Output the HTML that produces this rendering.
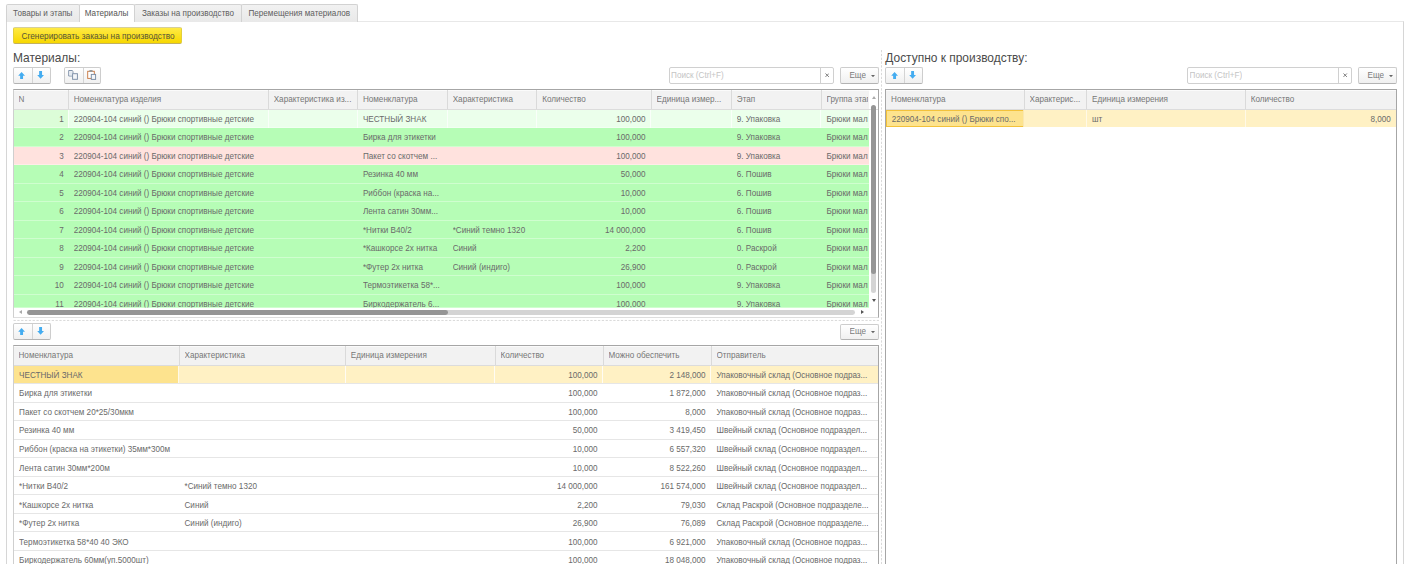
<!DOCTYPE html><html><head><meta charset='utf-8'><style>
*{box-sizing:border-box;margin:0;padding:0}
html,body{width:1406px;height:564px;overflow:hidden;background:#fff}
body{position:relative;font-family:"Liberation Sans",sans-serif;font-size:8.15px;color:#6a6a6a}
.a{position:absolute}
.t{position:absolute;white-space:nowrap;overflow:hidden;line-height:1;padding:2px 0;margin-top:-2px}
.tab{position:absolute;top:4px;height:17.5px;background:linear-gradient(#f1f1f1,#e9e9e9);border:1px solid #d2d2d2;border-bottom:none;border-radius:2px 2px 0 0;color:#5e5e5e}
.tab.act{background:#fff;height:18px;z-index:2;color:#555}
.frame{position:absolute;left:6px;top:21px;width:1397.5px;height:600px;border:1px solid #d6d6d6;border-top-color:#e8e8e8}
.ybtn{position:absolute;left:13px;top:27.3px;width:168.5px;height:16.9px;border-radius:2px;background:linear-gradient(#ffea45,#f7d700);border:1px solid #e3cf3c;border-top-color:#d6cf9a;border-bottom-color:#c2b160;color:#55553a;font-size:8.3px}
.title{position:absolute;font-size:11.95px;color:#4a4a4a;white-space:nowrap;line-height:1}
.btn{position:absolute;background:linear-gradient(#fff,#f0f0f0);border:1px solid #cdcdcd;border-bottom-color:#b3b3b3;border-radius:2px}
.search{position:absolute;background:#fff;border:1px solid #d0d0d0;border-radius:2px;color:#c4c4c4}
.cell{position:absolute;white-space:nowrap;overflow:hidden;line-height:1;padding:2px 0;margin-top:-2px}
.r{text-align:right}
</style></head><body>
<div class='frame'></div>
<div class='tab' style='left:6px;width:73.5px'><span class='t' style='left:0;right:0;text-align:center;top:4.6px'>Товары и этапы</span></div>
<div class='tab act' style='left:78.5px;width:56px'><span class='t' style='left:0;right:0;text-align:center;top:4.6px'>Материалы</span></div>
<div class='tab' style='left:134px;width:108px'><span class='t' style='left:0;right:0;text-align:center;top:4.6px'>Заказы на производство</span></div>
<div class='tab' style='left:241px;width:116.5px'><span class='t' style='left:0;right:0;text-align:center;top:4.6px'>Перемещения материалов</span></div>
<div class='ybtn'><span class='t' style='left:1.6px;right:0;text-align:center;top:3.3px'>Сгенерировать заказы на производство</span></div>
<div class='title' style='left:13px;top:52.6px'>Материалы:</div>
<div class='title' style='left:885.3px;top:52.6px'>Доступно к производству:</div>
<div class='btn' style='left:13px;top:67.3px;width:37.7px;height:16.3px'></div>
<div class='a' style='left:32px;top:67.8px;width:1px;height:15.3px;background:#d4d4d4'></div>
<svg class='a' style='left:18.3px;top:71.85px' width='7.2' height='7.2' viewBox='0 0 7.2 7.2'><path d='M3.6 0.1 L7.0 3.8 L5.05 3.8 L5.05 7.0 L2.15 7.0 L2.15 3.8 L0.2 3.8 Z' fill='#44acf0'/></svg>
<svg class='a' style='left:36.9px;top:71.15px' width='7.2' height='7.8' viewBox='0 0 7.2 7.8'><path d='M3.6 7.7 L7.0 3.95 L5.05 3.95 L5.05 0.1 L2.15 0.1 L2.15 3.95 L0.2 3.95 Z' fill='#44acf0'/></svg>
<div class='btn' style='left:64.3px;top:67.3px;width:37px;height:16.3px'></div>
<div class='a' style='left:83px;top:67.8px;width:1px;height:15.3px;background:#d4d4d4'></div>
<svg class='a' style='left:64px;top:67px' width='38' height='17' viewBox='0 0 38 17'>
<path d='M4.7 3.5 H8.2 L9.0 4.3 V6.5' fill='none' stroke='#7b8ea6' stroke-width='0.95'/>
<path d='M4.7 3.5 V9.0 H8.3' fill='none' stroke='#7b8ea6' stroke-width='0.95'/>
<rect x='5.4' y='4.3' width='2.6' height='4.1' fill='#e4eaf1'/>
<rect x='8.6' y='6.7' width='4.8' height='5.6' fill='#f4f6f9' stroke='#7b8ea6' stroke-width='0.95'/>
<rect x='23.7' y='4.3' width='6.6' height='7.1' fill='#fff' stroke='#c97a45' stroke-width='0.95'/>
<rect x='25.3' y='3.0' width='3.4' height='1.9' rx='0.6' fill='#9a9a9a'/>
<rect x='27.3' y='7.4' width='4.3' height='5.0' fill='#f4f6f9' stroke='#7b8ea6' stroke-width='0.95'/>
</svg>
<div class='search' style='left:668.5px;top:67.3px;width:165.3px;height:16.3px'><span class='t' style='left:1.6px;top:3.75px'>Поиск (Ctrl+F)</span></div>
<div class='a' style='left:819.9px;top:67.3px;width:1px;height:16.3px;background:#d0d0d0'></div>
<svg class='a' style='left:824.9px;top:72.85px' width='4.4' height='4.4' viewBox='0 0 4.4 4.4'><path d='M0.5 0.5 L3.9 3.9 M3.9 0.5 L0.5 3.9' stroke='#707070' stroke-width='0.9'/></svg>
<div class='btn' style='left:840.2px;top:67.3px;width:38.5px;height:16.3px;color:#7a7a7a'><span class='t' style='left:8.2px;top:3.85px'>Еще</span><svg class='a' style='left:30.2px;top:6.85px' width='4' height='2.2' viewBox='0 0 4 2.2'><path d='M0 0 L4 0 L2 2.2 Z' fill='#666'/></svg></div>
<div class='btn' style='left:885.2px;top:67.3px;width:38.2px;height:16.3px'></div>
<div class='a' style='left:904.1px;top:67.8px;width:1px;height:15.3px;background:#d4d4d4'></div>
<svg class='a' style='left:890.5px;top:71.85px' width='7.2' height='7.2' viewBox='0 0 7.2 7.2'><path d='M3.6 0.1 L7.0 3.8 L5.05 3.8 L5.05 7.0 L2.15 7.0 L2.15 3.8 L0.2 3.8 Z' fill='#44acf0'/></svg>
<svg class='a' style='left:909px;top:71.15px' width='7.2' height='7.8' viewBox='0 0 7.2 7.8'><path d='M3.6 7.7 L7.0 3.95 L5.05 3.95 L5.05 0.1 L2.15 0.1 L2.15 3.95 L0.2 3.95 Z' fill='#44acf0'/></svg>
<div class='search' style='left:1187px;top:67.3px;width:165.4px;height:16.3px'><span class='t' style='left:1.6px;top:3.75px'>Поиск (Ctrl+F)</span></div>
<div class='a' style='left:1337.8px;top:67.3px;width:1px;height:16.3px;background:#d0d0d0'></div>
<svg class='a' style='left:1343.15px;top:72.85px' width='4.4' height='4.4' viewBox='0 0 4.4 4.4'><path d='M0.5 0.5 L3.9 3.9 M3.9 0.5 L0.5 3.9' stroke='#707070' stroke-width='0.9'/></svg>
<div class='btn' style='left:1358.3px;top:67.3px;width:38.5px;height:16.3px;color:#7a7a7a'><span class='t' style='left:8.2px;top:3.85px'>Еще</span><svg class='a' style='left:30.2px;top:6.85px' width='4' height='2.2' viewBox='0 0 4 2.2'><path d='M0 0 L4 0 L2 2.2 Z' fill='#666'/></svg></div>
<div class='btn' style='left:13px;top:323.4px;width:37.6px;height:16.2px'></div>
<div class='a' style='left:32px;top:323.9px;width:1px;height:15.2px;background:#d4d4d4'></div>
<svg class='a' style='left:18.3px;top:327.9px' width='7.2' height='7.2' viewBox='0 0 7.2 7.2'><path d='M3.6 0.1 L7.0 3.8 L5.05 3.8 L5.05 7.0 L2.15 7.0 L2.15 3.8 L0.2 3.8 Z' fill='#44acf0'/></svg>
<svg class='a' style='left:36.9px;top:327.2px' width='7.2' height='7.8' viewBox='0 0 7.2 7.8'><path d='M3.6 7.7 L7.0 3.95 L5.05 3.95 L5.05 0.1 L2.15 0.1 L2.15 3.95 L0.2 3.95 Z' fill='#44acf0'/></svg>
<div class='btn' style='left:840.4px;top:323.6px;width:38.3px;height:16.1px;color:#7a7a7a'><span class='t' style='left:8.2px;top:3.75px'>Еще</span><svg class='a' style='left:30px;top:6.75px' width='4' height='2.2' viewBox='0 0 4 2.2'><path d='M0 0 L4 0 L2 2.2 Z' fill='#666'/></svg></div>
<svg class='a' style='left:13px;top:319px' width='866' height='3'><line x1='0.5' y1='1.45' x2='866' y2='1.45' stroke='#d9d9d9' stroke-width='1' stroke-dasharray='2.3 1.52'/></svg>
<svg class='a' style='left:880px;top:50px' width='3' height='520'><line x1='1.5' y1='0' x2='1.5' y2='520' stroke='#d9d9d9' stroke-width='1' stroke-dasharray='2.3 1.52'/></svg>
<div class='a' style='left:12.6px;top:88.7px;width:866.4px;height:229.1px;border:1px solid #a6a6a6;border-left-color:#cfcfcf;border-bottom-color:#dedede;background:#fff'></div>
<div class='a' style='left:13.6px;top:89.7px;width:855.7px;height:18.9px;background:#f2f2f2;border-top:1px solid #fbfbfb'></div>
<div class='a' style='left:13.6px;top:108.6px;width:864.4px;height:1px;background:#dcdcdc'></div>
<div class='a' style='left:67.7px;top:89.7px;width:1px;height:18.9px;background:#dadada'></div>
<div class='a' style='left:267.7px;top:89.7px;width:1px;height:18.9px;background:#dadada'></div>
<div class='a' style='left:356.9px;top:89.7px;width:1px;height:18.9px;background:#dadada'></div>
<div class='a' style='left:446.7px;top:89.7px;width:1px;height:18.9px;background:#dadada'></div>
<div class='a' style='left:536.2px;top:89.7px;width:1px;height:18.9px;background:#dadada'></div>
<div class='a' style='left:650.5px;top:89.7px;width:1px;height:18.9px;background:#dadada'></div>
<div class='a' style='left:730.8px;top:89.7px;width:1px;height:18.9px;background:#dadada'></div>
<div class='a' style='left:820.5px;top:89.7px;width:1px;height:18.9px;background:#dadada'></div>
<div class='cell' style='left:18.5px;width:48.2px;top:95.95px;color:#777'>N</div>
<div class='cell' style='left:73.7px;width:193px;top:95.95px;color:#777'>Номенклатура изделия</div>
<div class='cell' style='left:273.7px;width:82.2px;top:95.95px;color:#777'>Характеристика из...</div>
<div class='cell' style='left:362.9px;width:82.8px;top:95.95px;color:#777'>Номенклатура</div>
<div class='cell' style='left:452.7px;width:82.5px;top:95.95px;color:#777'>Характеристика</div>
<div class='cell' style='left:542.2px;width:107.3px;top:95.95px;color:#777'>Количество</div>
<div class='cell' style='left:656.5px;width:73.3px;top:95.95px;color:#777'>Единица измер...</div>
<div class='cell' style='left:736.8px;width:82.7px;top:95.95px;color:#777'>Этап</div>
<div class='cell' style='left:826.5px;width:41.3px;top:95.95px;color:#777'>Группа этапа</div>
<div class='a' style='left:13.6px;top:109.5px;width:855.7px;height:18.53px;overflow:hidden;background:#ebffeb'>
<div class='a' style='left:0px;top:0;width:54.6px;height:18.53px;background:#dcfdd8'></div>
<div class='cell r' style='left:2px;width:48.2px;top:6.2px'>1</div>
<div class='a' style='left:54.1px;top:0;width:1px;height:18.53px;background:rgba(255,255,255,0.7)'></div>
<div class='cell' style='left:60.1px;width:193px;top:6.2px'>220904-104 синий () Брюки спортивные детские</div>
<div class='a' style='left:254.1px;top:0;width:1px;height:18.53px;background:rgba(255,255,255,0.7)'></div>
<div class='a' style='left:343.3px;top:0;width:1px;height:18.53px;background:rgba(255,255,255,0.7)'></div>
<div class='cell' style='left:349.3px;width:82.8px;top:6.2px'>ЧЕСТНЫЙ ЗНАК</div>
<div class='a' style='left:433.1px;top:0;width:1px;height:18.53px;background:rgba(255,255,255,0.7)'></div>
<div class='a' style='left:522.6px;top:0;width:1px;height:18.53px;background:rgba(255,255,255,0.7)'></div>
<div class='cell r' style='left:525.1px;width:106.9px;top:6.2px'>100,000</div>
<div class='a' style='left:636.9px;top:0;width:1px;height:18.53px;background:rgba(255,255,255,0.7)'></div>
<div class='a' style='left:717.2px;top:0;width:1px;height:18.53px;background:rgba(255,255,255,0.7)'></div>
<div class='cell' style='left:723.2px;width:82.7px;top:6.2px'>9. Упаковка</div>
<div class='a' style='left:806.9px;top:0;width:1px;height:18.53px;background:rgba(255,255,255,0.7)'></div>
<div class='cell' style='left:812.9px;width:41.3px;top:6.2px'>Брюки мал</div>
<div class='a' style='left:0;right:0;bottom:0;height:1px;background:rgba(255,255,255,0.35)'></div>
</div>
<div class='a' style='left:13.6px;top:128.03px;width:855.7px;height:18.53px;overflow:hidden;background:#b6fdb6'>
<div class='cell r' style='left:2px;width:48.2px;top:6.2px'>2</div>
<div class='cell' style='left:60.1px;width:193px;top:6.2px'>220904-104 синий () Брюки спортивные детские</div>
<div class='cell' style='left:349.3px;width:82.8px;top:6.2px'>Бирка для этикетки</div>
<div class='cell r' style='left:525.1px;width:106.9px;top:6.2px'>100,000</div>
<div class='cell' style='left:723.2px;width:82.7px;top:6.2px'>9. Упаковка</div>
<div class='cell' style='left:812.9px;width:41.3px;top:6.2px'>Брюки мал</div>
<div class='a' style='left:0;right:0;bottom:0;height:1px;background:rgba(255,255,255,0.35)'></div>
</div>
<div class='a' style='left:13.6px;top:146.56px;width:855.7px;height:18.53px;overflow:hidden;background:#ffe2de'>
<div class='cell r' style='left:2px;width:48.2px;top:6.2px'>3</div>
<div class='cell' style='left:60.1px;width:193px;top:6.2px'>220904-104 синий () Брюки спортивные детские</div>
<div class='cell' style='left:349.3px;width:82.8px;top:6.2px'>Пакет со скотчем ...</div>
<div class='cell r' style='left:525.1px;width:106.9px;top:6.2px'>100,000</div>
<div class='cell' style='left:723.2px;width:82.7px;top:6.2px'>9. Упаковка</div>
<div class='cell' style='left:812.9px;width:41.3px;top:6.2px'>Брюки мал</div>
<div class='a' style='left:0;right:0;bottom:0;height:1px;background:rgba(255,255,255,0.35)'></div>
</div>
<div class='a' style='left:13.6px;top:165.09px;width:855.7px;height:18.53px;overflow:hidden;background:#b6fdb6'>
<div class='cell r' style='left:2px;width:48.2px;top:6.2px'>4</div>
<div class='cell' style='left:60.1px;width:193px;top:6.2px'>220904-104 синий () Брюки спортивные детские</div>
<div class='cell' style='left:349.3px;width:82.8px;top:6.2px'>Резинка 40 мм</div>
<div class='cell r' style='left:525.1px;width:106.9px;top:6.2px'>50,000</div>
<div class='cell' style='left:723.2px;width:82.7px;top:6.2px'>6. Пошив</div>
<div class='cell' style='left:812.9px;width:41.3px;top:6.2px'>Брюки мал</div>
<div class='a' style='left:0;right:0;bottom:0;height:1px;background:rgba(255,255,255,0.35)'></div>
</div>
<div class='a' style='left:13.6px;top:183.62px;width:855.7px;height:18.53px;overflow:hidden;background:#b6fdb6'>
<div class='cell r' style='left:2px;width:48.2px;top:6.2px'>5</div>
<div class='cell' style='left:60.1px;width:193px;top:6.2px'>220904-104 синий () Брюки спортивные детские</div>
<div class='cell' style='left:349.3px;width:82.8px;top:6.2px'>Риббон (краска на...</div>
<div class='cell r' style='left:525.1px;width:106.9px;top:6.2px'>10,000</div>
<div class='cell' style='left:723.2px;width:82.7px;top:6.2px'>6. Пошив</div>
<div class='cell' style='left:812.9px;width:41.3px;top:6.2px'>Брюки мал</div>
<div class='a' style='left:0;right:0;bottom:0;height:1px;background:rgba(255,255,255,0.35)'></div>
</div>
<div class='a' style='left:13.6px;top:202.15px;width:855.7px;height:18.53px;overflow:hidden;background:#b6fdb6'>
<div class='cell r' style='left:2px;width:48.2px;top:6.2px'>6</div>
<div class='cell' style='left:60.1px;width:193px;top:6.2px'>220904-104 синий () Брюки спортивные детские</div>
<div class='cell' style='left:349.3px;width:82.8px;top:6.2px'>Лента сатин 30мм...</div>
<div class='cell r' style='left:525.1px;width:106.9px;top:6.2px'>10,000</div>
<div class='cell' style='left:723.2px;width:82.7px;top:6.2px'>6. Пошив</div>
<div class='cell' style='left:812.9px;width:41.3px;top:6.2px'>Брюки мал</div>
<div class='a' style='left:0;right:0;bottom:0;height:1px;background:rgba(255,255,255,0.35)'></div>
</div>
<div class='a' style='left:13.6px;top:220.68px;width:855.7px;height:18.53px;overflow:hidden;background:#b6fdb6'>
<div class='cell r' style='left:2px;width:48.2px;top:6.2px'>7</div>
<div class='cell' style='left:60.1px;width:193px;top:6.2px'>220904-104 синий () Брюки спортивные детские</div>
<div class='cell' style='left:349.3px;width:82.8px;top:6.2px'>*Нитки В40/2</div>
<div class='cell' style='left:439.1px;width:82.5px;top:6.2px'>*Синий темно 1320</div>
<div class='cell r' style='left:525.1px;width:106.9px;top:6.2px'>14 000,000</div>
<div class='cell' style='left:723.2px;width:82.7px;top:6.2px'>6. Пошив</div>
<div class='cell' style='left:812.9px;width:41.3px;top:6.2px'>Брюки мал</div>
<div class='a' style='left:0;right:0;bottom:0;height:1px;background:rgba(255,255,255,0.35)'></div>
</div>
<div class='a' style='left:13.6px;top:239.21px;width:855.7px;height:18.53px;overflow:hidden;background:#b6fdb6'>
<div class='cell r' style='left:2px;width:48.2px;top:6.2px'>8</div>
<div class='cell' style='left:60.1px;width:193px;top:6.2px'>220904-104 синий () Брюки спортивные детские</div>
<div class='cell' style='left:349.3px;width:82.8px;top:6.2px'>*Кашкорсе 2х нитка</div>
<div class='cell' style='left:439.1px;width:82.5px;top:6.2px'>Синий</div>
<div class='cell r' style='left:525.1px;width:106.9px;top:6.2px'>2,200</div>
<div class='cell' style='left:723.2px;width:82.7px;top:6.2px'>0. Раскрой</div>
<div class='cell' style='left:812.9px;width:41.3px;top:6.2px'>Брюки мал</div>
<div class='a' style='left:0;right:0;bottom:0;height:1px;background:rgba(255,255,255,0.35)'></div>
</div>
<div class='a' style='left:13.6px;top:257.74px;width:855.7px;height:18.53px;overflow:hidden;background:#b6fdb6'>
<div class='cell r' style='left:2px;width:48.2px;top:6.2px'>9</div>
<div class='cell' style='left:60.1px;width:193px;top:6.2px'>220904-104 синий () Брюки спортивные детские</div>
<div class='cell' style='left:349.3px;width:82.8px;top:6.2px'>*Футер 2х нитка</div>
<div class='cell' style='left:439.1px;width:82.5px;top:6.2px'>Синий (индиго)</div>
<div class='cell r' style='left:525.1px;width:106.9px;top:6.2px'>26,900</div>
<div class='cell' style='left:723.2px;width:82.7px;top:6.2px'>0. Раскрой</div>
<div class='cell' style='left:812.9px;width:41.3px;top:6.2px'>Брюки мал</div>
<div class='a' style='left:0;right:0;bottom:0;height:1px;background:rgba(255,255,255,0.35)'></div>
</div>
<div class='a' style='left:13.6px;top:276.27px;width:855.7px;height:18.53px;overflow:hidden;background:#b6fdb6'>
<div class='cell r' style='left:2px;width:48.2px;top:6.2px'>10</div>
<div class='cell' style='left:60.1px;width:193px;top:6.2px'>220904-104 синий () Брюки спортивные детские</div>
<div class='cell' style='left:349.3px;width:82.8px;top:6.2px'>Термоэтикетка 58*...</div>
<div class='cell r' style='left:525.1px;width:106.9px;top:6.2px'>100,000</div>
<div class='cell' style='left:723.2px;width:82.7px;top:6.2px'>9. Упаковка</div>
<div class='cell' style='left:812.9px;width:41.3px;top:6.2px'>Брюки мал</div>
<div class='a' style='left:0;right:0;bottom:0;height:1px;background:rgba(255,255,255,0.35)'></div>
</div>
<div class='a' style='left:13.6px;top:294.8px;width:855.7px;height:13.2px;overflow:hidden;background:#b6fdb6'>
<div class='cell r' style='left:2px;width:48.2px;top:6.2px'>11</div>
<div class='cell' style='left:60.1px;width:193px;top:6.2px'>220904-104 синий () Брюки спортивные детские</div>
<div class='cell' style='left:349.3px;width:82.8px;top:6.2px'>Биркодержатель 6...</div>
<div class='cell r' style='left:525.1px;width:106.9px;top:6.2px'>100,000</div>
<div class='cell' style='left:723.2px;width:82.7px;top:6.2px'>9. Упаковка</div>
<div class='cell' style='left:812.9px;width:41.3px;top:6.2px'>Брюки мал</div>
<div class='a' style='left:0;right:0;bottom:0;height:1px;background:rgba(255,255,255,0.35)'></div>
</div>
<div class='a' style='left:871px;top:260px;width:5px;height:33px;border-radius:2.5px;background:#d4d4d4'></div>
<div class='a' style='left:871px;top:104.5px;width:5px;height:169px;border-radius:2.5px;background:#959595'></div>
<div class='a' style='left:430px;top:309.8px;width:425px;height:4.8px;border-radius:2.4px;background:#d4d4d4'></div>
<div class='a' style='left:27px;top:309.8px;width:420.5px;height:4.8px;border-radius:2.4px;background:#959595'></div>
<svg class='a' style='left:18.5px;top:310px' width='3' height='4' viewBox='0 0 3 4'><path d='M3 0 L0 2 L3 4Z' fill='#aaa'/></svg>
<svg class='a' style='left:860.5px;top:310px' width='3' height='4' viewBox='0 0 3 4'><path d='M0 0 L3 2 L0 4Z' fill='#555'/></svg>
<svg class='a' style='left:872px;top:95.5px' width='4' height='3' viewBox='0 0 4 3'><path d='M0 3 L2 0 L4 3Z' fill='#aaa'/></svg>
<svg class='a' style='left:872px;top:299px' width='4' height='3' viewBox='0 0 4 3'><path d='M0 0 L2 3 L4 0Z' fill='#555'/></svg>
<div class='a' style='left:12.6px;top:345.4px;width:866.6px;height:254.6px;border:1px solid #a6a6a6;border-left-color:#cfcfcf;border-bottom-color:#dedede;background:#fff'></div>
<div class='a' style='left:13.6px;top:346.4px;width:864.6px;height:18.4px;background:#f2f2f2;border-top:1px solid #fbfbfb'></div>
<div class='a' style='left:13.6px;top:364.8px;width:864.6px;height:1px;background:#dcdcdc'></div>
<div class='a' style='left:178.5px;top:346.4px;width:1px;height:18.4px;background:#dadada'></div>
<div class='a' style='left:344.8px;top:346.4px;width:1px;height:18.4px;background:#dadada'></div>
<div class='a' style='left:494.5px;top:346.4px;width:1px;height:18.4px;background:#dadada'></div>
<div class='a' style='left:602.5px;top:346.4px;width:1px;height:18.4px;background:#dadada'></div>
<div class='a' style='left:710.5px;top:346.4px;width:1px;height:18.4px;background:#dadada'></div>
<div class='cell' style='left:18.5px;width:159px;top:352.4px;color:#777'>Номенклатура</div>
<div class='cell' style='left:184.5px;width:159.3px;top:352.4px;color:#777'>Характеристика</div>
<div class='cell' style='left:350.8px;width:142.7px;top:352.4px;color:#777'>Единица измерения</div>
<div class='cell' style='left:500.5px;width:101px;top:352.4px;color:#777'>Количество</div>
<div class='cell' style='left:608.5px;width:101px;top:352.4px;color:#777'>Можно обеспечить</div>
<div class='cell' style='left:716.5px;width:160.2px;top:352.4px;color:#777'>Отправитель</div>
<div class='a' style='left:13.6px;top:365.7px;width:864.6px;height:18.53px;overflow:hidden;background:#fff1c4'>
<div class='a' style='left:0px;top:0;width:165.4px;height:18.53px;background:#fde38e'></div>
<div class='cell' style='left:5.5px;width:158.4px;top:6.2px'>ЧЕСТНЫЙ ЗНАК</div>
<div class='a' style='left:164.9px;top:0;width:1px;height:18.53px;background:rgba(255,255,255,0.8)'></div>
<div class='a' style='left:331.2px;top:0;width:1px;height:18.53px;background:rgba(255,255,255,0.8)'></div>
<div class='a' style='left:480.9px;top:0;width:1px;height:18.53px;background:rgba(255,255,255,0.8)'></div>
<div class='cell r' style='left:483.4px;width:100.6px;top:6.2px'>100,000</div>
<div class='a' style='left:588.9px;top:0;width:1px;height:18.53px;background:rgba(255,255,255,0.8)'></div>
<div class='cell r' style='left:591.4px;width:100.6px;top:6.2px'>2 148,000</div>
<div class='a' style='left:696.9px;top:0;width:1px;height:18.53px;background:rgba(255,255,255,0.8)'></div>
<div class='cell' style='left:702.9px;width:160.2px;top:6.2px'>Упаковочный склад (Основное подраз...</div>
<div class='a' style='left:0;right:0;bottom:0;height:1px;background:#e6e6e6'></div>
</div>
<div class='a' style='left:13.6px;top:384.23px;width:864.6px;height:18.53px;overflow:hidden;'>
<div class='cell' style='left:5.5px;width:158.4px;top:6.2px'>Бирка для этикетки</div>
<div class='cell r' style='left:483.4px;width:100.6px;top:6.2px'>100,000</div>
<div class='cell r' style='left:591.4px;width:100.6px;top:6.2px'>1 872,000</div>
<div class='cell' style='left:702.9px;width:160.2px;top:6.2px'>Упаковочный склад (Основное подраз...</div>
<div class='a' style='left:0;right:0;bottom:0;height:1px;background:#e6e6e6'></div>
</div>
<div class='a' style='left:13.6px;top:402.76px;width:864.6px;height:18.53px;overflow:hidden;'>
<div class='cell' style='left:5.5px;width:158.4px;top:6.2px'>Пакет со скотчем 20*25/30мкм</div>
<div class='cell r' style='left:483.4px;width:100.6px;top:6.2px'>100,000</div>
<div class='cell r' style='left:591.4px;width:100.6px;top:6.2px'>8,000</div>
<div class='cell' style='left:702.9px;width:160.2px;top:6.2px'>Упаковочный склад (Основное подраз...</div>
<div class='a' style='left:0;right:0;bottom:0;height:1px;background:#e6e6e6'></div>
</div>
<div class='a' style='left:13.6px;top:421.29px;width:864.6px;height:18.53px;overflow:hidden;'>
<div class='cell' style='left:5.5px;width:158.4px;top:6.2px'>Резинка 40 мм</div>
<div class='cell r' style='left:483.4px;width:100.6px;top:6.2px'>50,000</div>
<div class='cell r' style='left:591.4px;width:100.6px;top:6.2px'>3 419,450</div>
<div class='cell' style='left:702.9px;width:160.2px;top:6.2px'>Швейный склад (Основное подраздел...</div>
<div class='a' style='left:0;right:0;bottom:0;height:1px;background:#e6e6e6'></div>
</div>
<div class='a' style='left:13.6px;top:439.82px;width:864.6px;height:18.53px;overflow:hidden;'>
<div class='cell' style='left:5.5px;width:158.4px;top:6.2px'>Риббон (краска на этикетки) 35мм*300м</div>
<div class='cell r' style='left:483.4px;width:100.6px;top:6.2px'>10,000</div>
<div class='cell r' style='left:591.4px;width:100.6px;top:6.2px'>6 557,320</div>
<div class='cell' style='left:702.9px;width:160.2px;top:6.2px'>Швейный склад (Основное подраздел...</div>
<div class='a' style='left:0;right:0;bottom:0;height:1px;background:#e6e6e6'></div>
</div>
<div class='a' style='left:13.6px;top:458.35px;width:864.6px;height:18.53px;overflow:hidden;'>
<div class='cell' style='left:5.5px;width:158.4px;top:6.2px'>Лента сатин 30мм*200м</div>
<div class='cell r' style='left:483.4px;width:100.6px;top:6.2px'>10,000</div>
<div class='cell r' style='left:591.4px;width:100.6px;top:6.2px'>8 522,260</div>
<div class='cell' style='left:702.9px;width:160.2px;top:6.2px'>Швейный склад (Основное подраздел...</div>
<div class='a' style='left:0;right:0;bottom:0;height:1px;background:#e6e6e6'></div>
</div>
<div class='a' style='left:13.6px;top:476.88px;width:864.6px;height:18.53px;overflow:hidden;'>
<div class='cell' style='left:5.5px;width:158.4px;top:6.2px'>*Нитки В40/2</div>
<div class='cell' style='left:170.9px;width:159.3px;top:6.2px'>*Синий темно 1320</div>
<div class='cell r' style='left:483.4px;width:100.6px;top:6.2px'>14 000,000</div>
<div class='cell r' style='left:591.4px;width:100.6px;top:6.2px'>161 574,000</div>
<div class='cell' style='left:702.9px;width:160.2px;top:6.2px'>Швейный склад (Основное подраздел...</div>
<div class='a' style='left:0;right:0;bottom:0;height:1px;background:#e6e6e6'></div>
</div>
<div class='a' style='left:13.6px;top:495.41px;width:864.6px;height:18.53px;overflow:hidden;'>
<div class='cell' style='left:5.5px;width:158.4px;top:6.2px'>*Кашкорсе 2х нитка</div>
<div class='cell' style='left:170.9px;width:159.3px;top:6.2px'>Синий</div>
<div class='cell r' style='left:483.4px;width:100.6px;top:6.2px'>2,200</div>
<div class='cell r' style='left:591.4px;width:100.6px;top:6.2px'>79,030</div>
<div class='cell' style='left:702.9px;width:160.2px;top:6.2px'>Склад Раскрой (Основное подразделе...</div>
<div class='a' style='left:0;right:0;bottom:0;height:1px;background:#e6e6e6'></div>
</div>
<div class='a' style='left:13.6px;top:513.94px;width:864.6px;height:18.53px;overflow:hidden;'>
<div class='cell' style='left:5.5px;width:158.4px;top:6.2px'>*Футер 2х нитка</div>
<div class='cell' style='left:170.9px;width:159.3px;top:6.2px'>Синий (индиго)</div>
<div class='cell r' style='left:483.4px;width:100.6px;top:6.2px'>26,900</div>
<div class='cell r' style='left:591.4px;width:100.6px;top:6.2px'>76,089</div>
<div class='cell' style='left:702.9px;width:160.2px;top:6.2px'>Склад Раскрой (Основное подразделе...</div>
<div class='a' style='left:0;right:0;bottom:0;height:1px;background:#e6e6e6'></div>
</div>
<div class='a' style='left:13.6px;top:532.47px;width:864.6px;height:18.53px;overflow:hidden;'>
<div class='cell' style='left:5.5px;width:158.4px;top:6.2px'>Термоэтикетка 58*40 40 ЭКО</div>
<div class='cell r' style='left:483.4px;width:100.6px;top:6.2px'>100,000</div>
<div class='cell r' style='left:591.4px;width:100.6px;top:6.2px'>6 921,000</div>
<div class='cell' style='left:702.9px;width:160.2px;top:6.2px'>Упаковочный склад (Основное подраз...</div>
<div class='a' style='left:0;right:0;bottom:0;height:1px;background:#e6e6e6'></div>
</div>
<div class='a' style='left:13.6px;top:551px;width:864.6px;height:18.53px;overflow:hidden;'>
<div class='cell' style='left:5.5px;width:158.4px;top:6.2px'>Биркодержатель 60мм(уп.5000шт)</div>
<div class='cell r' style='left:483.4px;width:100.6px;top:6.2px'>100,000</div>
<div class='cell r' style='left:591.4px;width:100.6px;top:6.2px'>18 048,000</div>
<div class='cell' style='left:702.9px;width:160.2px;top:6.2px'>Упаковочный склад (Основное подраз...</div>
<div class='a' style='left:0;right:0;bottom:0;height:1px;background:#e6e6e6'></div>
</div>
<div class='a' style='left:885.2px;top:89.2px;width:512.1px;height:510.8px;border:1px solid #a6a6a6;border-left-color:#a6a6a6;border-bottom-color:#dedede;background:#fff'></div>
<div class='a' style='left:886.2px;top:90.2px;width:510.1px;height:18.6px;background:#f2f2f2;border-top:1px solid #fbfbfb'></div>
<div class='a' style='left:886.2px;top:108.8px;width:510.1px;height:1px;background:#dcdcdc'></div>
<div class='a' style='left:1023.5px;top:90.2px;width:1px;height:18.6px;background:#dadada'></div>
<div class='a' style='left:1086px;top:90.2px;width:1px;height:18.6px;background:#dadada'></div>
<div class='a' style='left:1244.7px;top:90.2px;width:1px;height:18.6px;background:#dadada'></div>
<div class='cell' style='left:891.1px;width:131.4px;top:96.3px;color:#777'>Номенклатура</div>
<div class='cell' style='left:1029.5px;width:55.5px;top:96.3px;color:#777'>Характерис...</div>
<div class='cell' style='left:1092px;width:151.7px;top:96.3px;color:#777'>Единица измерения</div>
<div class='cell' style='left:1250.7px;width:144.1px;top:96.3px;color:#777'>Количество</div>
<div class='a' style='left:886.2px;top:109.8px;width:510.1px;height:17.3px;overflow:hidden;background:#fff1c4'>
<div class='a' style='left:0px;top:0;width:137.8px;height:17.3px;background:#fde38e;border:1px solid #f3c23a'></div>
<div class='cell' style='left:5.5px;width:130.8px;top:6.2px'>220904-104 синий () Брюки спо...</div>
<div class='a' style='left:137.3px;top:0;width:1px;height:17.3px;background:rgba(255,255,255,0.6)'></div>
<div class='a' style='left:199.8px;top:0;width:1px;height:17.3px;background:rgba(255,255,255,0.6)'></div>
<div class='cell' style='left:205.8px;width:151.7px;top:6.2px'>шт</div>
<div class='a' style='left:358.5px;top:0;width:1px;height:17.3px;background:rgba(255,255,255,0.6)'></div>
<div class='cell r' style='left:361px;width:143.7px;top:6.2px'>8,000</div>
</div>
</body></html>
